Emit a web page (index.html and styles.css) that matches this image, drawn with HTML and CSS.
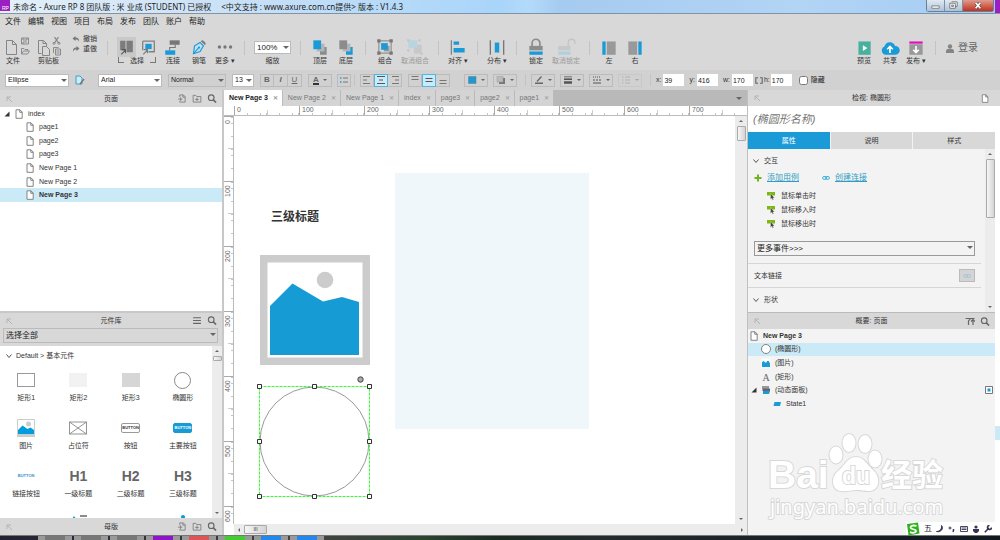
FILE: index.html
```html
<!DOCTYPE html>
<html lang="zh-CN">
<head>
    <meta charset="utf-8">
    <title>未命名 - Axure RP 8</title>
    <meta name="viewport" content="width=device-width, initial-scale=1.0">
    <link rel="stylesheet" href="styles.css">
</head>
<body>
    <!-- shared icons -->
    <svg class="defs" aria-hidden="true">
        <symbol id="i-page" viewBox="0 0 8 10"><path d="M1 .8h4L7.2 3v6.3H1zM4.8.8v2.5h2.4" fill="#fff" stroke="#777" stroke-width=".9"/></symbol>
        <symbol id="i-pin" viewBox="0 0 8 8"><path d="M2 6V2h4M2 2l5 5" fill="none" stroke="#b4b4b4" stroke-width="1"/></symbol>
        <symbol id="i-search" viewBox="0 0 8 8"><circle cx="3.3" cy="3.3" r="2.5" fill="none" stroke="#666"/><path d="M5 5l2.6 2.6" stroke="#666" stroke-width="1.4"/></symbol>
        <symbol id="i-addpage" viewBox="0 0 10 10"><path d="M2.500 3.500V1h4l2 2v6h-6V8M6 1v2.500h2.500M.5 5.700h5M3.500 3.700v4" fill="none" stroke="#777" stroke-width=".9"/></symbol>
        <symbol id="i-addfolder" viewBox="0 0 10 10"><path d="M.7 9V1.500h3l1 1.300h4.600V9zM3 6h4M5 4v4" fill="none" stroke="#777" stroke-width=".9"/></symbol>
        <symbol id="i-chev" viewBox="0 0 8 8"><path d="M1.500 2.500L4 5.500l2.500-3" fill="none" stroke="#555" stroke-width="1"/></symbol>
        <symbol id="i-open" viewBox="0 0 6 6"><path d="M5.500.5v5h-5z" fill="#333"/></symbol>
        <symbol id="i-link" viewBox="0 0 8 5"><rect x=".6" y="1" width="4" height="2.800" rx="1.400" fill="none" stroke="#3fb1e0"/><rect x="3.400" y="1" width="4" height="2.800" rx="1.400" fill="none" stroke="#3fb1e0"/></symbol>
        <symbol id="i-event" viewBox="0 0 10 9"><path d="M1 .5h8V4H1z" fill="#7db80e"/><path d="M4.500 2v6l1.300-1.200.9 2 1-.5-.9-1.800h1.700z" fill="#444" stroke="#fff" stroke-width=".3"/></symbol>
        <symbol id="i-image" viewBox="0 0 18 18"><path d="M.5.500h17v15H.500z" fill="#fff" stroke="#ccc"/><circle cx="11.500" cy="5" r="2.500" fill="#ccc"/><path d="M1 11l4.500-4.500 5 3.500 3-1.500 3.500 2.500v4H1z" fill="#009ddc"/><path d="M0 15.500h18V18H0z" fill="#ccc"/></symbol>
    </svg>

    <header class="titlebar">
        <svg class="app-icon" viewBox="0 0 10 11"><path d="M0 0h10v11H0z" fill="#9b1fc1"/><text x="2" y="10" font-size="5" fill="#fff">RP</text></svg>
        <span class="window-title">未命名 - Axure RP 8 团队版 : 米 业成 (STUDENT) 已授权</span>
        <span class="window-title">&lt;中文支持 : www.axure.com.cn提供&gt; 版本 : V1.4.3</span>
        <div class="window-buttons">
            <button aria-label="最小化"><svg viewBox="0 0 18 12"><path d="M5 6.500h8v2.500H5z" fill="#fff" stroke="#555" stroke-width=".7"/></svg></button>
            <button aria-label="还原"><svg viewBox="0 0 18 12"><path d="M7 2h6v5h-2M5 3.500h6v5.500H5zM7 5.500h2V7H7z" fill="#fff" stroke="#555" stroke-width=".8"/></svg></button>
            <button class="close" aria-label="关闭"><svg viewBox="0 0 30 12"><path d="M12.500 3l5 6m0-6l-5 6" stroke="#444" stroke-width="3"/><path d="M12.500 3l5 6m0-6l-5 6" stroke="#fff" stroke-width="2"/></svg></button>
        </div>
        <span class="next-window"></span>
    </header>

    <nav class="menubar">
        <button>文件</button><button>编辑</button><button>视图</button><button>项目</button><button>布局</button><button>发布</button><button>团队</button><button>账户</button><button>帮助</button>
    </nav>

    <div class="toolbar">
        <button class="tool pair">
            <svg viewBox="0 0 30 20"><path d="M3.500 3.500h6l4 4v10h-10zM9.500 3.500v4h4" fill="none" stroke="#858585"/><path d="M18.500 1h7v6h-7zM20 1v2h4V1M20 7V5h4M18.500 17v-5.500h2.500l1 1h3v1M18.500 17l2-3h6l-2 3z" fill="none" stroke="#858585" stroke-width=".9"/></svg>
            <span>文件</span>
        </button>
        <button class="tool pair">
            <svg viewBox="0 0 30 20"><path d="M3.500 16.500v-13h5l3 3v3M8 3.500v3h3.500M3.500 16.500h3M7.500 9.500h4l3 3v6h-7z" fill="none" stroke="#858585"/><path d="M19.500 0l4 6M23.500 0l-4 6" stroke="#858585" stroke-width="1.200"/><path d="M18.500 16v-5.500h5M20.500 12h5v6h-5zM21.500 14h3M21.500 16h3" fill="none" stroke="#858585" stroke-width=".9"/><circle cx="19" cy="6.300" r="1" fill="none" stroke="#858585"/><circle cx="24" cy="6.300" r="1" fill="none" stroke="#858585"/></svg>
            <span>剪贴板</span>
        </button>
        <div class="history">
            <button><svg viewBox="0 0 8 7"><path d="M3.500 0L.5 2.500l3 2.500V3.500c2 0 3 .5 3.500 2.500.5-3-1-4.500-3.500-4.500z" fill="#777"/></svg>撤销</button>
            <button><svg viewBox="0 0 8 7"><path d="M4.500 0l3 2.500-3 2.500V3.500C2.500 3.500 1.500 4 1 6 .5 3 2 1.500 4.500 1.500z" fill="#777"/></svg>重做</button>
        </div>
        <i class="sep"></i>
        <div class="tool select-mode">
            <div class="modes">
                <button class="on" aria-label="相交选中"><svg viewBox="0 0 18 18"><path d="M3 3h5v9H3zM9 3h6v11H9z" fill="#7c7c7c"/><path d="M4 16l4-4M8 15v-3.500H4.500" stroke="#555" fill="none"/></svg></button>
                <button aria-label="包含选中"><svg viewBox="0 0 18 18"><path d="M3.500 3.500h11v10H9M3.500 12V3.500" fill="none" stroke="#808080" stroke-width="1.200"/><path d="M6 6h6v5H6z" fill="#1a9bd7"/><path d="M4 16l4-4M8 15v-3.500H4.500" stroke="#777" fill="none"/></svg></button>
            </div>
            <span class="bracket">选择</span>
        </div>
        <button class="tool">
            <svg viewBox="0 0 18 18"><path d="M6 3h9v4H6z" fill="#777"/><path d="M2 12h9v4H2z" fill="#1a9bd7"/><path d="M11 7v2.500H6V12" fill="none" stroke="#777"/></svg>
            <span>连接</span>
        </button>
        <button class="tool">
            <svg viewBox="0 0 18 18"><path d="M4 15l1-7 5-3 3 3-3 5z" fill="#bfe0f0" stroke="#1a9bd7"/><path d="M10.500 3.500l4 4 .5-2-2.500-2.500z" fill="#777"/><path d="M4 15l4.500-5" stroke="#1a9bd7"/><circle cx="9" cy="9.500" r="1" fill="#1a9bd7"/></svg>
            <span>钢笔</span>
        </button>
        <button class="tool">
            <svg viewBox="0 0 18 18"><circle cx="4" cy="9" r="1.500" fill="#777"/><circle cx="9" cy="9" r="1.500" fill="#777"/><circle cx="14" cy="9" r="1.500" fill="#777"/></svg>
            <span>更多 ▾</span>
        </button>
        <i class="sep"></i>
        <label class="tool zoom">
            <span class="pick"><select><option>100%</option></select></span>
            <span>缩放</span>
        </label>
        <i class="sep"></i>
        <button class="tool">
            <svg viewBox="0 0 18 18"><path d="M9 9h6v7H9z" fill="#8c8c8c"/><path d="M6 6h7v7H6z" fill="#b5b5b5"/><path d="M3 3h7v8H3z" fill="#1a9bd7"/></svg>
            <span>顶层</span>
        </button>
        <button class="tool">
            <svg viewBox="0 0 18 18"><path d="M9 9h6v7H9z" fill="#1a9bd7"/><path d="M6 6h7v7H6z" fill="#b5b5b5"/><path d="M3 3h7v8H3z" fill="#8c8c8c"/></svg>
            <span>底层</span>
        </button>
        <i class="sep"></i>
        <button class="tool">
            <svg viewBox="0 0 18 18"><path d="M3.500 3.500h11v11h-11z" fill="none" stroke="#777" stroke-width=".8"/><path d="M8 8h5v5H8z" fill="#999"/><path d="M5.500 5.500h6v6h-6z" fill="#1a9bd7"/><path d="M2 2h3v3H2zM13 2h3v3h-3zM2 13h3v3H2zM13 13h3v3h-3z" fill="#777"/></svg>
            <span>组合</span>
        </button>
        <button class="tool wide" disabled>
            <svg viewBox="0 0 18 18"><path d="M8 7h7v8H8z" fill="#c8c8c8"/><path d="M3 3h8v7H3z" fill="#b9d3df"/><path d="M2 2h2v2H2zM12 2h2v2h-2zM2 11h2v2H2zM14 14h2v2h-2z" fill="#c4c4c4"/></svg>
            <span>取消组合</span>
        </button>
        <i class="sep"></i>
        <button class="tool">
            <svg viewBox="0 0 18 18"><path d="M3 3v13" stroke="#777" stroke-width="1"/><path d="M5 4h5v3H5zM5 10h10v4H5z" fill="#1a9bd7"/></svg>
            <span>对齐 ▾</span>
        </button>
        <i class="sep"></i>
        <button class="tool">
            <svg viewBox="0 0 18 18"><path d="M3 3v13M15 3v13" stroke="#777" stroke-width="1.200"/><path d="M7 5h4v9H7z" fill="#1a9bd7"/></svg>
            <span>分布 ▾</span>
        </button>
        <i class="sep"></i>
        <button class="tool">
            <svg viewBox="0 0 18 18"><path d="M5.500 8V5.500a3.500 3.500 0 0 1 7 0V8" fill="none" stroke="#8c8c8c" stroke-width="1.500"/><path d="M3 8h12v4H3z" fill="#8c8c8c"/><path d="M3 13h12v3H3z" fill="#1a9bd7"/></svg>
            <span>锁定</span>
        </button>
        <button class="tool wide" disabled>
            <svg viewBox="0 0 18 18"><path d="M11 8V5a3 3 0 0 1 6 0v1" fill="none" stroke="#c4c4c4" stroke-width="1.200"/><path d="M2 8h11v4H2z" fill="#c8c8c8"/><path d="M2 13h11v3H2z" fill="#b0d0df"/></svg>
            <span>取消锁定</span>
        </button>
        <i class="sep"></i>
        <button class="tool">
            <svg viewBox="0 0 18 18"><path d="M3 4h3v12H3z" fill="#1a9bd7"/><path d="M7 4h8v12H7z" fill="#999"/></svg>
            <span>左</span>
        </button>
        <button class="tool">
            <svg viewBox="0 0 18 18"><path d="M12 4h3v12h-3z" fill="#1a9bd7"/><path d="M3 4h8v12H3z" fill="#999"/></svg>
            <span>右</span>
        </button>
        <div class="account">
            <button class="tool">
                <svg viewBox="0 0 18 18"><path d="M4 4h11v12H4z" fill="#48b09c"/><path d="M8 7.500v5l4-2.500z" fill="#fff"/></svg>
                <span>预览</span>
            </button>
            <button class="tool">
                <svg viewBox="0 0 18 18"><path d="M4.500 16a4 4 0 0 1-.5-7.500 5 5 0 0 1 9.500-.5A4 4 0 0 1 14 16z" fill="#1a9bd7"/><path d="M9 14.500V9M6.500 11L9 8.500l2.500 2.500" stroke="#fff" stroke-width="1.500" fill="none"/></svg>
                <span>共享</span>
            </button>
            <button class="tool">
                <svg viewBox="0 0 18 18"><path d="M3 4h12v2H3z" fill="#e010c0"/><path d="M3 6.500h12V16H3z" fill="#999"/><path d="M9 8v5.500M6.500 11.500L9 14l2.500-2.500" stroke="#fff" stroke-width="1.500" fill="none"/></svg>
                <span>发布 ▾</span>
            </button>
            <i class="sep"></i>
            <button class="login"><svg viewBox="0 0 8 9"><circle cx="4" cy="2.500" r="2.200" fill="#858585"/><path d="M0 9V7q0-2 2-2h4q2 0 2 2v2z" fill="#858585"/></svg>登录</button>
        </div>
    </div>

    <div class="formatbar">
        <span class="pick shape"><select aria-label="形状样式"><option>Ellipse</option></select></span>
        <button class="style-btn" aria-label="样式管理"><svg viewBox="0 0 10 10"><path d="M1 1h4l2 2v6H1z" fill="#cdeaf7" stroke="#3a9fd0"/><path d="M5 9l4-5" stroke="#777" stroke-width="1.500"/></svg></button>
        <span class="pick font"><select aria-label="字体"><option>Arial</option></select></span>
        <span class="pick flat weight"><select aria-label="字形"><option>Normal</option></select></span>
        <span class="pick size"><select aria-label="字号"><option>13</option></select></span>
        <div class="btns">
            <button class="bold">B</button><button class="italic">I</button><button class="underline">U</button>
        </div>
        <button class="drop"><b class="font-color">A</b></button>
        <button class="box" aria-label="项目符号"><svg viewBox="0 0 10 8"><path d="M1 2h1.500M1 6h1.500" stroke="#1a9bd7" stroke-width="1.500"/><path d="M4 2h5M4 6h5" stroke="#777"/></svg></button>
        <i class="sep"></i>
        <div class="btns">
            <button aria-label="左对齐"><svg viewBox="0 0 10 8"><path d="M1 .5h7M1 4h4M1 7.500h7" stroke="#777"/></svg></button>
            <button class="on" aria-label="居中"><svg viewBox="0 0 10 8"><path d="M1 .5h8M3 4h4M1 7.500h8" stroke="#555"/></svg></button>
            <button aria-label="右对齐"><svg viewBox="0 0 10 8"><path d="M2 .5h7M5 4h4M2 7.500h7" stroke="#777"/></svg></button>
        </div>
        <div class="btns">
            <button aria-label="顶部对齐"><svg viewBox="0 0 10 8"><path d="M1.500 .5h7M1.500 3.500h7" stroke="#777"/></svg></button>
            <button class="on" aria-label="垂直居中"><svg viewBox="0 0 10 8"><path d="M1.500 2.500h7M1.500 5.500h7" stroke="#555"/></svg></button>
            <button aria-label="底部对齐"><svg viewBox="0 0 10 8"><path d="M1.500 4.500h7M1.500 7.500h7" stroke="#777"/></svg></button>
        </div>
        <button class="drop fill" aria-label="填充"><svg viewBox="0 0 10 8"><path d="M1.500 .5h7.500v7H1.500z" fill="#1a9bd7" stroke="#777" stroke-width=".5"/></svg></button>
        <button class="drop" aria-label="阴影"><svg viewBox="0 0 10 8"><path d="M3 2h6v6H3z" fill="#777"/><path d="M1 0h6v6H1z" fill="#bbb" stroke="#999" stroke-width=".5"/></svg></button>
        <i class="sep"></i>
        <button class="drop" aria-label="线条颜色"><svg viewBox="0 0 10 8"><path d="M3 5.500L7.500.5" stroke="#666" stroke-width="1.300"/><path d="M1 7.200h8" stroke="#555" stroke-width="1.300"/></svg></button>
        <button class="drop" aria-label="线宽"><svg viewBox="0 0 10 8"><path d="M1 .8h8" stroke="#555" stroke-width=".8"/><path d="M1 3.200h8" stroke="#555" stroke-width="1.600"/><path d="M1 6.500h8" stroke="#555" stroke-width="2.500"/></svg></button>
        <button class="drop" aria-label="线型"><svg viewBox="0 0 10 8"><path d="M1 1h8" stroke="#555" stroke-dasharray="1 1"/><path d="M1 4h8" stroke="#555" stroke-dasharray="2 1"/><path d="M1 7h8" stroke="#555"/></svg></button>
        <button class="drop" aria-label="箭头" disabled><svg viewBox="0 0 10 8"><path d="M1 1h1.500M4 1h5M1 4h1.500M4 4h5M1 7h1.500M4 7h5" stroke="#888"/></svg></button>
        <i class="sep"></i>
        <div class="coords">
            <label class="coord">x:<input value="39"></label>
            <label class="coord">y:<input value="416"></label>
            <label class="coord">w:<input value="170"></label>
            <label class="coord tight"><svg viewBox="0 0 8 7"><path d="M3 .8H.8v5.400H3M5 .8h2.200v5.400H5" fill="none" stroke="#666" stroke-width="1.100"/></svg>h:<input value="170"></label>
            <label class="hide"><input type="checkbox">隐藏</label>
        </div>
    </div>

    <main class="workspace">
        <aside class="sidebar">
            <div class="panel-head">
                <svg><use href="#i-pin"/></svg><h2>页面</h2>
                <div class="head-tools">
                    <button aria-label="添加页面"><svg><use href="#i-addpage"/></svg></button>
                    <button aria-label="添加文件夹"><svg><use href="#i-addfolder"/></svg></button>
                    <button aria-label="搜索"><svg><use href="#i-search"/></svg></button>
                </div>
            </div>
            <ul class="tree pages">
                <li class="root"><svg class="twisty"><use href="#i-open"/></svg><svg><use href="#i-page"/></svg>index</li>
                <li><svg><use href="#i-page"/></svg>page1</li>
                <li><svg><use href="#i-page"/></svg>page2</li>
                <li><svg><use href="#i-page"/></svg>page3</li>
                <li><svg><use href="#i-page"/></svg>New Page 1</li>
                <li><svg><use href="#i-page"/></svg>New Page 2</li>
                <li class="selected"><svg><use href="#i-page"/></svg>New Page 3</li>
            </ul>
            <div class="panel-head">
                <svg><use href="#i-pin"/></svg><h2>元件库</h2>
                <div class="head-tools">
                    <button aria-label="选项"><svg viewBox="0 0 8 8"><path d="M.5 1.500h7M.5 4h7M.5 6.500h7" stroke="#666"/></svg></button>
                    <button aria-label="搜索"><svg><use href="#i-search"/></svg></button>
                </div>
            </div>
            <div class="lib-select"><span class="pick flat"><select aria-label="元件库"><option>选择全部</option></select></span></div>
            <div class="library">
                <div class="lib-body">
                    <h3><svg><use href="#i-chev"/></svg>Default &gt; 基本元件</h3>
                    <div class="widgets">
                        <div class="widget"><i><b class="w-rect"></b></i>矩形1</div>
                        <div class="widget"><i><b class="w-rect light"></b></i>矩形2</div>
                        <div class="widget"><i><b class="w-rect mid"></b></i>矩形3</div>
                        <div class="widget"><i><b class="w-oval"></b></i>椭圆形</div>
                        <div class="widget"><i><svg><use href="#i-image"/></svg></i>图片</div>
                        <div class="widget"><i><svg viewBox="0 0 18 18"><path d="M.5 3h17v12H.5zL17.500 15M17.500 3L.5 15" fill="#fff" stroke="#888" stroke-width=".9"/></svg></i>占位符</div>
                        <div class="widget"><i><b class="w-btn">BUTTON</b></i>按钮</div>
                        <div class="widget"><i><b class="w-btn primary">BUTTON</b></i>主要按钮</div>
                        <div class="widget"><i><b class="w-btn link">BUTTON</b></i>链接按钮</div>
                        <div class="widget"><i><b class="w-head">H1</b></i>一级标题</div>
                        <div class="widget"><i><b class="w-head">H2</b></i>二级标题</div>
                        <div class="widget"><i><b class="w-head">H3</b></i>三级标题</div>
                        <div class="widget"></div>
                        <div class="widget"><i><svg viewBox="0 0 18 18"><path d="M3 4l2-3 2 3z" fill="#009ddc"/><path d="M11 1h7" stroke="#666" stroke-width="1.500"/></svg></i></div>
                        <div class="widget"></div>
                        <div class="widget"><i><svg viewBox="0 0 18 18"><circle cx="9" cy="2" r="2" fill="#009ddc"/></svg></i></div>
                    </div>
                </div>
                <div class="vscroll"><i class="up"></i><i class="thumb small"></i><i class="down"></i></div>
            </div>
            <div class="panel-head">
                <svg><use href="#i-pin"/></svg><h2>母版</h2>
                <div class="head-tools">
                    <button aria-label="添加母版"><svg><use href="#i-addpage"/></svg></button>
                    <button aria-label="添加文件夹"><svg><use href="#i-addfolder"/></svg></button>
                    <button aria-label="搜索"><svg><use href="#i-search"/></svg></button>
                </div>
            </div>
        </aside>

        <section class="editor">
            <div class="tabs">
                <button class="active">New Page 3 <span>✕</span></button>
                <button>New Page 2 <span>✕</span></button>
                <button>New Page 1 <span>✕</span></button>
                <button>index <span>✕</span></button>
                <button>page3 <span>✕</span></button>
                <button>page2 <span>✕</span></button>
                <button>page1 <span>✕</span></button>
                <i class="more"></i>
            </div>
            <div class="ruler-x"><span>0</span><span>100</span><span>200</span><span>300</span><span>400</span><span>500</span><span>600</span><span>700</span></div>
            <div class="stage">
                <div class="ruler-y"><span>0</span><span>100</span><span>200</span><span>300</span><span>400</span><span>500</span><span>600</span></div>
                <div class="canvas">
                    <div class="shape-panel"></div>
                    <h3 class="shape-title">三级标题</h3>
                    <svg class="shape-image" viewBox="0 0 110 110">
                        <path d="M0 0h110v110H0z" fill="#ccc"/>
                        <path d="M7.500 7.500h95v95h-95z" fill="#fff"/>
                        <circle cx="65" cy="25" r="8.300" fill="#ccc"/>
                        <path d="M10 51L32.500 28.500 63 46.500 82 42l17 5v53H10z" fill="#169bd5"/>
                    </svg>
                    <svg class="shape-oval" viewBox="0 0 124 128">
                        <circle cx="59.500" cy="67.500" r="54.500" fill="#fff" stroke="#999"/>
                        <path d="M4.500 12.500h110v110H4.500z" fill="none" stroke="#3f3" stroke-dasharray="3 1"/>
                        <g fill="#fff" stroke="#333">
                            <path d="M2.500 10.500h4v4h-4zM57.500 10.500h4v4h-4zM112.500 10.500h4v4h-4zM2.500 65.500h4v4h-4zM112.500 65.500h4v4h-4zM2.500 120.500h4v4h-4zM57.500 120.500h4v4h-4zM112.500 120.500h4v4h-4z"/>
                        </g>
                        <circle cx="105.500" cy="5.500" r="2.700" fill="#aaa" stroke="#444"/>
                    </svg>
                </div>
                <div class="vscroll"><i class="up"></i><i class="thumb"></i><i class="down"></i></div>
            </div>
            <div class="hscroll"><i class="left"></i><i class="thumb">III</i><i class="right"></i></div>
        </section>

        <aside class="inspector">
            <div class="panel-head">
                <svg><use href="#i-pin"/></svg><h2>检视: 椭圆形</h2>
                <div class="head-tools">
                    <button aria-label="页面"><svg><use href="#i-page"/></svg></button>
                </div>
            </div>
            <input class="shape-name" aria-label="名称" placeholder="(椭圆形名称)">
            <div class="inspector-tabs"><button class="active">属性</button><button>说明</button><button>样式</button></div>
            <div class="props">
                <div class="props-body">
                    <section>
                        <h3><svg><use href="#i-chev"/></svg>交互</h3>
                        <div class="actions">
                            <a href="#"><svg viewBox="0 0 8 8"><path d="M4 .5v7M.5 4h7" stroke="#6fb51c" stroke-width="2"/></svg><span>添加用例</span></a>
                            <a href="#"><svg><use href="#i-link"/></svg><span>创建连接</span></a>
                        </div>
                        <ul class="events">
                            <li><svg><use href="#i-event"/></svg>鼠标单击时</li>
                            <li><svg><use href="#i-event"/></svg>鼠标移入时</li>
                            <li><svg><use href="#i-event"/></svg>鼠标移出时</li>
                        </ul>
                        <span class="pick flat more-events"><select aria-label="更多事件"><option>更多事件&gt;&gt;&gt;</option></select></span>
                    </section>
                    <section class="text-link">文本链接<button disabled aria-label="链接"><svg><use href="#i-link"/></svg></button></section>
                    <section><h3><svg><use href="#i-chev"/></svg>形状</h3></section>
                </div>
                <div class="vscroll"><i class="up"></i><i class="thumb tall"></i><i class="down"></i></div>
            </div>
            <div class="panel-head">
                <svg><use href="#i-pin"/></svg><h2>概要: 页面</h2>
                <div class="head-tools">
                    <button aria-label="筛选"><svg viewBox="0 0 10 8"><path d="M.5 1h5L3.500 3.500v4M4 1h5.500M8 1v6.500M6 4l2-2 2 2" fill="none" stroke="#666" stroke-width="1.200"/></svg></button>
                    <button aria-label="搜索"><svg><use href="#i-search"/></svg></button>
                </div>
            </div>
            <ul class="tree outline">
                <li class="root"><svg><use href="#i-page"/></svg><b>New Page 3</b></li>
                <li class="selected"><svg viewBox="0 0 10 10"><circle cx="5" cy="5" r="4.500" fill="#fff" stroke="#777" stroke-width=".9"/></svg>(椭圆形)</li>
                <li><svg viewBox="0 0 10 10"><path d="M.5.500h9v9H.500z" fill="#fff"/><path d="M1 4l2-1 1 1.500h1.500L6 3h2v1.500h1V9H1z" fill="#1a9bd7"/></svg>(图片)</li>
                <li><svg viewBox="0 0 10 10"><text x="1.500" y="8.500" font-size="10" fill="#666" font-family="Liberation Serif">A</text></svg>(矩形)</li>
                <li class="panel"><svg class="twisty"><use href="#i-open"/></svg><svg viewBox="0 0 10 10"><path d="M1 1h7v3H1z" fill="#999"/><path d="M1.500 3.500H9V6H1.500z" fill="#666"/><path d="M2 6h7l-1 3H2z" fill="#1a9bd7"/></svg>(动态面板)
                    <svg class="visible" viewBox="0 0 8 8"><path d="M.5.500h7v7h-7z" fill="#fff" stroke="#777"/><path d="M2.500 2.500h3v3h-3z" fill="#1a9bd7"/></svg></li>
                <li class="state"><svg viewBox="0 0 10 10"><path d="M2.500 3H9L8 7H1.500z" fill="#1a9bd7"/></svg>State1</li>
            </ul>
        </aside>
        <div class="edge"></div>
    </main>

    <footer class="taskbar"><i></i><i></i><i></i><i class="purple"></i><i class="red"></i><i class="green"></i><i class="blue"></i><i class="blue"></i></footer>

    <svg class="watermark" viewBox="0 0 190 96">
        <g class="outline-text">
            <text class="wm-latin" x="5" y="60">Bai</text>
            <ellipse cx="73" cy="27" rx="6.500" ry="8.500"/><ellipse cx="86" cy="15" rx="6.500" ry="9"/><ellipse cx="102" cy="16" rx="6.500" ry="9"/><ellipse cx="112" cy="31" rx="6.500" ry="8.500"/>
            <path d="M93 29c8 0 11 8 17 13 8 7 7 20-3 21-6 0-9-1-14-1s-9 2-15 1c-9-1-11-13-3-20 7-6 10-14 18-14z"/>
            <text class="wm-du" x="79" y="56">du</text>
            <text class="wm-cjk" x="118" y="58">经验</text>
            <text class="wm-url" x="7" y="86">jingyan.baidu.com</text>
        </g>
    </svg>

    <div class="ime">
        <svg class="ime-logo" viewBox="0 0 14 14"><path d="M1 2l11-1.500 1.500 11L2.500 13.500z" fill="#2eb31c"/><path d="M10.500 4C8 3 4.500 3.500 4.500 5.500S10 7 10 9s-3.500 2.200-6 1.200" fill="none" stroke="#fff" stroke-width="1.800"/></svg>
        <span>五</span>
        <svg viewBox="0 0 8 8"><path d="M5.500.500c2.500 3-.5 7-5 6 3.500 0 5.500-2.500 5-6z" fill="#335" stroke="#335"/></svg>
        <svg viewBox="0 0 8 8"><circle cx="2" cy="3" r="1" fill="none" stroke="#335"/><path d="M5.500 4v1.500L5 7" stroke="#335" stroke-width="1.500" fill="none"/></svg>
        <svg viewBox="0 0 8 8"><path d="M.5 1.500h7v5h-7zM1.500 3h5M1.500 4.500h5" fill="none" stroke="#335" stroke-width=".9"/></svg>
        <svg viewBox="0 0 8 8"><circle cx="4" cy="2" r="1.600" fill="#335"/><path d="M1 4h6v2L5 8H3L1 6z" fill="#335"/></svg>
        <svg viewBox="0 0 8 8"><path d="M.8 7.200L5 3M7.500 2.500a2 2 0 1 1-2-2" fill="none" stroke="#335" stroke-width="1.600"/></svg>
    </div>
</body>
</html>
```
FILE: styles.css
```css
* {
    box-sizing: border-box;
}
body {
    margin: 0;
    height: 100vh;
    display: flex;
    flex-direction: column;
    overflow: hidden;
    background: #d8d8d8;
    color: #333;
    font: 7px/10px "Liberation Sans", "Noto Sans CJK SC", sans-serif;
}
h2, h3, ul {
    margin: 0;
    padding: 0;
    font-size: 7px;
    font-weight: normal;
    list-style: none;
}
i {
    font-style: normal;
}
button, input, select {
    margin: 0;
    padding: 0;
    border: 0;
    border-radius: 0;
    background: none;
    color: inherit;
    font: inherit;
}
svg {
    flex: none;
    display: block;
    width: 10px;
    height: 10px;
}
.defs {
    position: absolute;
    width: 0;
    height: 0;
}

/* title bar */
.titlebar {
    flex: none;
    display: flex;
    height: 14px;
    border-bottom: 1px solid #8094a8;
    background: linear-gradient(90deg, #e4f0fa, #cde2f6 20%, #a9d5fa 50%, #b3dafa 53%, #a6cbf0 56%, #b2d4f5 80%, #a4ccf4);
}
.app-icon {
    height: 11px;
}
.window-title {
    margin: 0 7px 0 3px;
    font: 8px/13px "Noto Sans", "Noto Sans CJK SC", sans-serif;
    color: #222;
    white-space: nowrap;
}
.window-buttons {
    display: flex;
    height: 12px;
    margin-left: auto;
    border: 1px solid #68809a;
    border-top: 0;
    border-radius: 0 0 3px 3px;
}
.window-buttons button {
    width: 18px;
    background: linear-gradient(#e2e9f1, #adc2d8);
    border-right: 1px solid #7890a8;
}
.window-buttons svg {
    width: 100%;
    height: 11px;
}
.window-buttons .close {
    width: 30px;
    border: 0;
    background: linear-gradient(#df9b8d, #c2321c);
}
.next-window {
    width: 5px;
    margin-left: 1px;
    background: #9b1fc1;
}

.menubar {
    flex: none;
    display: flex;
    gap: 7px;
    height: 16px;
    padding-left: 5px;
    font-size: 8px;
    color: #222;
}

/* main toolbar */
.toolbar {
    flex: none;
    display: flex;
    align-items: center;
    height: 40px;
    padding: 2px 8px 0 3px;
}
.tool {
    flex: none;
    display: flex;
    flex-direction: column;
    align-items: center;
    width: 26px;
    line-height: 8px;
    white-space: nowrap;
}
.tool > svg {
    width: 20px;
    height: 20px;
}
.tool.wide {
    width: 34px;
}
.tool:disabled {
    color: #999;
}
.tool.pair {
    width: 32px;
    align-items: flex-start;
}
.tool.pair > svg {
    width: 30px;
}
.tool.pair > span {
    margin-left: 3px;
}
.history {
    display: flex;
    flex-direction: column;
    margin: 0 4px 14px 5px;
}
.history button {
    display: flex;
    align-items: center;
    gap: 3px;
}
.history svg {
    width: 8px;
    height: 7px;
}
.sep {
    flex: none;
    width: 1px;
    height: 14px;
    margin: 0 6px;
    background: #c4c4c4;
}
.toolbar .sep {
    margin-bottom: 6px;
}
.select-mode {
    width: 46px;
}
.modes {
    display: flex;
    gap: 3px;
}
.modes button {
    width: 19px;
    height: 20px;
}
.modes .on {
    background: #c9c9c9;
}
.modes svg {
    width: 19px;
    height: 20px;
}
.bracket {
    display: flex;
    gap: 6px;
}
.bracket::before, .bracket::after {
    content: "";
    width: 5px;
    height: 5px;
    border: solid #777;
    border-width: 0 0 1px 1px;
}
.bracket::after {
    border-width: 0 1px 1px 0;
}
.zoom {
    width: 37px;
    margin: 0 3px;
    gap: 3px;
    padding-top: 4px;
}
.account {
    display: flex;
    align-items: center;
    margin-left: auto;
}
.login {
    display: flex;
    align-items: center;
    gap: 4px;
    margin: 0 14px 6px 4px;
    font-size: 10px;
    color: #666;
}
.login svg {
    width: 8px;
    height: 9px;
}

/* select box with a small arrow */
.pick {
    position: relative;
    display: block;
}
.pick select {
    appearance: none;
    display: block;
    width: 100%;
    height: 13px;
    padding: 0 2px;
    border: 1px solid #bbb;
    background: #fff;
    color: #222;
}
.pick.flat select {
    background: transparent;
}
.pick::after {
    content: "";
    position: absolute;
    right: 2px;
    top: 5px;
    border: 3px solid transparent;
    border-top-color: #666;
    border-bottom: 0;
    pointer-events: none;
}
.zoom .pick {
    width: 100%;
}
.zoom select {
    font-size: 8px;
}

/* format bar */
.formatbar {
    flex: none;
    display: flex;
    align-items: center;
    height: 20px;
    padding-left: 5px;
    background: #d1d1d1;
}
.formatbar .pick {
    margin-right: 6px;
}
.shape, .font {
    width: 64px;
}
.weight {
    width: 58px;
}
.size {
    width: 22px;
}
.style-btn {
    margin-right: 13px;
}
.btns {
    display: flex;
    margin-right: 6px;
}
.btns button, .drop, .box {
    flex: none;
    display: flex;
    align-items: center;
    justify-content: center;
    width: 14px;
    height: 13px;
    border: 1px solid #bbb;
    font-size: 8px;
    color: #666;
}
.btns button + button {
    border-left: 0;
}
.btns .on, .btns button + .on {
    background: #c9eaf8;
    border: 1px solid #58b4dc;
}
.btns svg, .drop svg, .box svg {
    height: 8px;
}
.bold {
    font-weight: bold;
}
.btns .italic {
    font-style: italic;
    font-weight: bold;
}
.underline {
    text-decoration: underline;
}
.drop {
    width: 24px;
    gap: 4px;
    margin-right: 5px;
}
.drop::after {
    content: "";
    border: 2px solid transparent;
    border-top-color: #666;
    border-bottom: 0;
}
.drop:disabled {
    opacity: .4;
}
.fill {
    margin-left: 8px;
}
.formatbar .sep {
    height: 12px;
    margin: 0 5px 0 3px;
}
.font-color {
    line-height: 7px;
    border-bottom: 2px solid #333;
}
.coords {
    display: flex;
    align-items: center;
    gap: 5px;
}
.coord {
    display: flex;
    align-items: center;
    gap: 2px;
}
.coord input {
    width: 21px;
    height: 12px;
    padding: 0 1px;
    background: #fff;
    color: #222;
}
.coord.tight {
    gap: 1px;
    margin-left: -3px;
}
.coord svg {
    width: 8px;
    height: 7px;
}
.hide {
    display: flex;
    align-items: center;
    gap: 3px;
    margin-left: 2px;
    color: #222;
}
.hide input {
    width: 9px;
    height: 9px;
}

/* workspace */
.workspace {
    flex: 1;
    display: grid;
    grid-template-columns: 224px 1fr 247px 5px;
    min-height: 0;
}
.sidebar, .editor, .inspector {
    display: flex;
    flex-direction: column;
    min-width: 0;
    min-height: 0;
}
.panel-head {
    flex: none;
    display: grid;
    grid-template-columns: 1fr auto 1fr;
    align-items: center;
    height: 17px;
    padding: 0 5px;
    background: #d8d8d8;
}
.panel-head > svg {
    width: 8px;
    height: 8px;
}
.head-tools {
    display: flex;
    justify-content: flex-end;
    gap: 5px;
}
.head-tools svg {
    height: 9px;
}
.tree {
    display: grid;
    grid-auto-rows: 1fr;
}
.tree li {
    display: flex;
    align-items: center;
    gap: 4px;
    padding-left: 25px;
}
.tree li.root {
    padding-left: 4px;
}
.tree .selected {
    background: #cbeaf7;
}
.tree .twisty {
    width: 6px;
    height: 6px;
}
.pages {
    height: 95px;
    flex: none;
}
.pages .selected {
    font-weight: bold;
}
.sidebar {
    background: #fff;
    border-right: 2px solid #c8c8c8;
}
.sidebar .tree + .panel-head {
    margin-top: auto;
    border-top: 2px solid #c8c8c8;
}
.lib-select {
    flex: none;
    padding: 0 4px 3px 3px;
    background: #d8d8d8;
}
.lib-select select {
    height: 15px;
    font-size: 8px;
}
.library {
    flex: none;
    display: flex;
    height: 172px;
}
.lib-body {
    flex: 1;
    overflow: hidden;
}
h3 {
    display: flex;
    align-items: center;
    gap: 2px;
}
h3 svg {
    width: 8px;
    height: 8px;
}
.library h3 {
    height: 20px;
    padding-left: 5px;
    gap: 3px;
}
.widgets {
    display: grid;
    grid-template-columns: repeat(4, 1fr);
    grid-auto-rows: 48px;
    padding-right: 3px;
}
.widget {
    display: flex;
    flex-direction: column;
    align-items: center;
    gap: 4px;
    padding-top: 5px;
}
.widget i {
    display: grid;
    place-items: center;
    height: 18px;
}
.widget svg {
    width: 18px;
    height: 18px;
}
.w-rect {
    width: 18px;
    height: 14px;
    border: 1px solid #999;
}
.w-rect.light {
    background: #f2f2f2;
    border: 0;
}
.w-rect.mid {
    background: #d6d6d6;
    border: 0;
}
.w-oval {
    width: 17px;
    height: 17px;
    border: 1px solid #888;
    border-radius: 50%;
}
.w-btn {
    width: 19px;
    border: 1px solid #999;
    border-radius: 2px;
    font-size: 4px;
    line-height: 8px;
    text-align: center;
}
.w-btn.primary {
    background: #169bd5;
    border-color: #169bd5;
    color: #fff;
}
.w-btn.link {
    border-color: transparent;
    color: #3a8dcc;
}
.w-head {
    font-size: 14px;
    color: #666;
}

/* scroll bars */
.vscroll {
    flex: none;
    display: flex;
    flex-direction: column;
    align-items: center;
    width: 10px;
    background: #ececec;
}
.up, .down, .left, .right {
    margin: 4px 0;
    border: 2px solid transparent;
}
.up {
    border-top: 0;
    border-bottom-color: #666;
}
.down {
    margin-top: auto;
    border-bottom: 0;
    border-top-color: #666;
}
.left {
    margin: 0 4px;
    border-left: 0;
    border-right-color: #666;
}
.right {
    margin: 0 4px 0 auto;
    border-right: 0;
    border-left-color: #666;
}
.thumb {
    width: 9px;
    height: 15px;
    border: 1px solid #aaa;
    border-radius: 1px;
    background: linear-gradient(90deg, #f6f6f6, #d4d4d4);
}
.thumb.small {
    height: 5px;
}
.thumb.tall {
    height: 59px;
}
.hscroll {
    flex: none;
    display: flex;
    align-items: center;
    height: 11px;
    margin-left: 10px;
    background: #ececec;
}
.hscroll .thumb {
    width: 23px;
    height: 9px;
    font-size: 5px;
    line-height: 7px;
    text-align: center;
}

/* editor */
.editor {
    background: #fff;
    border-right: 1px solid #c0c0c0;
}
.tabs {
    flex: none;
    display: flex;
    align-items: center;
    height: 16px;
    background: #b9b9b9;
}
.tabs button {
    height: 16px;
    padding: 0 4px 0 5px;
    border-right: 1px solid #bbb;
    background: #d4d4d4;
    color: #777;
    white-space: nowrap;
}
.tabs span {
    margin-left: 3px;
    font-size: 6px;
    color: #999;
}
.tabs .active {
    background: #fff;
    color: #222;
    font-weight: bold;
}
.more {
    margin: 0 5px 0 auto;
    border: 3px solid transparent;
    border-top-color: #666;
    border-bottom: 0;
}
.ruler-x {
    flex: none;
    display: flex;
    height: 10px;
    padding-left: 10px;
    border-bottom: 1px solid #bbb;
    overflow: hidden;
    color: #666;
}
.ruler-x span {
    flex: none;
    width: 65px;
    padding-left: 2px;
    line-height: 8px;
    border-left: 1px solid #aaa;
    background:
        linear-gradient(90deg, transparent 32px, #ccc 32px, #ccc 33px, transparent 33px) bottom / 100% 5px no-repeat,
        repeating-linear-gradient(90deg, transparent 0 9%, #c4c4c4 9% 10%) bottom / 100% 2px no-repeat;
}
.stage {
    flex: 1;
    display: flex;
    min-height: 0;
}
.ruler-y {
    flex: none;
    width: 10px;
    border-right: 1px solid #bbb;
    overflow: hidden;
    color: #666;
}
.ruler-y span {
    display: block;
    width: 9px;
    height: 65px;
    padding-bottom: 3px;
    line-height: 8px;
    writing-mode: vertical-rl;
    transform: rotate(180deg);
    text-align: right;
    border-bottom: 1px solid #aaa;
    background:
        linear-gradient(transparent 32px, #ccc 32px, #ccc 33px, transparent 33px) left / 5px 100% no-repeat,
        repeating-linear-gradient(transparent 0 9%, #c4c4c4 9% 10%) left / 2px 100% no-repeat;
}
.canvas {
    flex: 1;
    position: relative;
    overflow: hidden;
}
.stage .vscroll {
    width: 12px;
}
.shape-panel {
    position: absolute;
    left: 161px;
    top: 57px;
    width: 194px;
    height: 256px;
    background: #eff7fa;
}
.shape-title {
    position: absolute;
    left: 37px;
    top: 94px;
    font-size: 12px;
    line-height: 14px;
    font-weight: bold;
}
.shape-image {
    position: absolute;
    left: 26px;
    top: 139px;
    width: 110px;
    height: 110px;
}
.shape-oval {
    position: absolute;
    left: 21px;
    top: 258px;
    width: 124px;
    height: 128px;
}

/* inspector */
.inspector {
    background: #f3f3f3;
}
.inspector .panel-head {
    height: 16px;
}
.shape-name {
    flex: none;
    height: 26px;
    padding-left: 5px;
    background: #fff;
    font-size: 11px;
    font-style: italic;
}
.shape-name::placeholder {
    color: #777;
}
.inspector-tabs {
    flex: none;
    display: grid;
    grid-template-columns: repeat(3, 1fr);
    gap: 1px;
    height: 17px;
}
.inspector-tabs button {
    background: #d8d8d8;
}
.inspector-tabs .active {
    background: #1a9bd7;
    color: #fff;
}
.props {
    flex: none;
    display: flex;
    height: 163px;
}
.props-body {
    flex: 1;
    overflow: hidden;
}
.props section {
    margin-right: 4px;
    padding: 7px 6px;
    border-bottom: 1px solid #d6d6d6;
}
.props h3 {
    margin-left: -2px;
    gap: 4px;
}
.actions {
    display: flex;
    gap: 23px;
    margin-top: 7px;
}
.actions a {
    display: flex;
    align-items: center;
    gap: 5px;
    font-size: 8px;
    color: #2f9cc4;
    text-decoration: none;
}
.actions span {
    text-decoration: underline;
}
.actions svg {
    width: 8px;
    height: 8px;
}
.events {
    display: grid;
    gap: 4px;
    margin: 8px 0 12px 12px;
}
.events li {
    display: flex;
    gap: 5px;
}
.more-events select {
    height: 15px;
    border-color: #999;
    font-size: 8px;
}
.props .text-link {
    display: flex;
    align-items: center;
    justify-content: space-between;
    padding: 5px 6px;
}
.text-link button {
    display: grid;
    place-items: center;
    width: 16px;
    height: 13px;
    border: 1px solid #bbb;
    background: #d4d4d4;
}
.text-link svg {
    width: 8px;
    opacity: .3;
}
.props + .panel-head {
    border-top: 1px solid #bbb;
    height: 17px;
}
.outline {
    height: 82px;
}
.tree.outline li {
    padding-left: 13px;
}
.tree.outline .root {
    padding-left: 1px;
}
.tree.outline .panel {
    padding-left: 3px;
}
.tree.outline .state {
    padding-left: 24px;
}
.outline .visible {
    width: 8px;
    height: 8px;
    margin: 0 2px 0 auto;
}
.edge {
    background: linear-gradient(#d8d8d8 16px, #fff 16px, #fff 336px, #cbeaf7 336px, #cbeaf7 350px, #fff 350px);
}

.taskbar {
    flex: none;
    display: flex;
    gap: 2px;
    height: 5px;
    padding-left: 38px;
    border-top: 1px solid #777;
    background: linear-gradient(90deg, #223, #444 30%, #2c4430 42%, #1c2b20 50%, #222b30 60%, #101820);
}
.taskbar i {
    width: 34px;
    border: solid #999;
    border-width: 0 7px;
    background: #777;
}
.taskbar .purple {
    background: #8e14c8;
}
.taskbar .red {
    background: #d55;
}
.taskbar .green {
    background: #4c3;
}
.taskbar .blue {
    background: #28e;
}

/* overlays */
.watermark {
    position: absolute;
    right: 47px;
    bottom: 16px;
    width: 190px;
    height: 96px;
    pointer-events: none;
}
.outline-text {
    fill: #fff;
    stroke: #d8d8d8;
    stroke-width: 2;
    paint-order: stroke;
}
.wm-latin {
    font: bold 39px "Liberation Sans", sans-serif;
}
.wm-du {
    font: bold 23px "Liberation Sans", sans-serif;
}
.wm-cjk {
    font: bold 31px "Noto Sans CJK SC", sans-serif;
}
.wm-url {
    font: 20px "Noto Sans", sans-serif;
}
.ime {
    position: absolute;
    right: 5px;
    bottom: 5px;
    display: flex;
    align-items: center;
    gap: 4px;
    height: 13px;
    padding-right: 3px;
    background: #fff;
    font-size: 8px;
    color: #223;
}
.ime svg {
    width: 8px;
    height: 8px;
}
.ime .ime-logo {
    width: 14px;
    height: 14px;
}
```
